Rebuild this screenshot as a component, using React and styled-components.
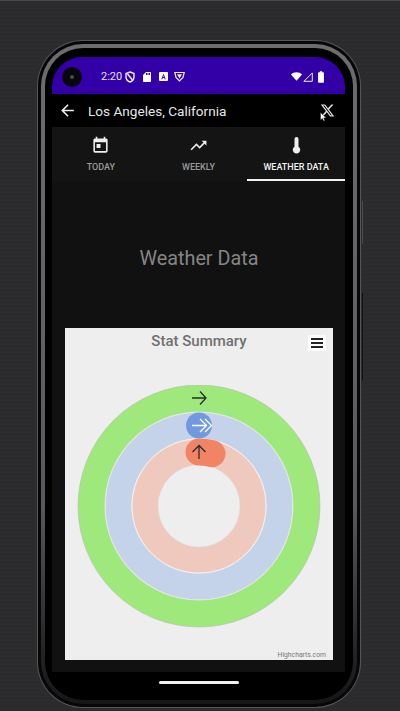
import React from "react";
import styled, { createGlobalStyle } from "styled-components";
import { FaXTwitter } from "react-icons/fa6";
import {
  MdArrowBack,
  MdBatteryFull,
  MdSdCard,
  MdToday,
  MdTrendingUp,
} from "react-icons/md";

const GlobalStyle = createGlobalStyle`
  html, body {
    margin: 0;
    padding: 0;
    background: #2b2b2d;
    font-family: Roboto, "Liberation Sans", sans-serif;
  }
`;

const Page = styled.div`
  width: 400px;
  height: 711px;
  box-sizing: border-box;
  padding: 39px 39px 3px 37px;
  overflow: hidden;
  border-top: 1px solid #4a4a4c;
  background: repeating-linear-gradient(#2b2b2d 0 3px, #2d2d2f 3px 4px);
`;

const Phone = styled.div`
  position: relative;
  height: 668px;
  box-sizing: border-box;
  padding: 1px;
  border-radius: 46px;
  background: #56565a;
`;

const Shell = styled.div`
  height: 100%;
  box-sizing: border-box;
  padding: 3px;
  border-radius: 45px;
  background: #070707;
`;

const Band = styled.div`
  height: 100%;
  box-sizing: border-box;
  padding: 4px;
  border-radius: 42px;
  background: linear-gradient(#6c6c6e 0%, #59595b 70%, #242425 92%, #161617 100%);
`;

const Bezel = styled.div`
  height: 100%;
  box-sizing: border-box;
  padding: 9px 8px 0 7px;
  border-radius: 38px;
  background: #000;
  display: flex;
  flex-direction: column;
`;

const SideKey = styled.div`
  position: absolute;
  right: -2px;
  top: ${(p) => p.$top}px;
  width: 1px;
  height: ${(p) => p.$height}px;
  background: ${(p) => p.$color};
`;

const StatusBar = styled.div`
  height: 37px;
  flex: none;
  box-sizing: border-box;
  padding: 2px 17px 0 10px;
  border-radius: 30px 30px 0 0;
  background: #3300a8;
  color: #fff;
  display: flex;
  align-items: center;
`;

const Camera = styled.div`
  width: 20px;
  height: 20px;
  border-radius: 50%;
  background: #08080c;
  margin-right: 19px;
  display: flex;
  align-items: center;
  justify-content: center;
  &::after {
    content: "";
    width: 4px;
    height: 4px;
    border-radius: 50%;
    background: #4a4a55;
  }
`;

const Clock = styled.span`
  font-size: 11px;
  color: #e6e0f5;
  margin-right: 3px;
`;

const StatusIcons = styled.div`
  display: flex;
  align-items: center;
  gap: ${(p) => p.$gap}px;
  margin-left: ${(p) => (p.$end ? "auto" : "0")};
`;

const AppBar = styled.div`
  height: 33px;
  flex: none;
  box-sizing: border-box;
  padding: 0 10px 0 6px;
  background: #000;
  color: #eee;
  display: flex;
  align-items: center;
`;

const AppTitle = styled.span`
  font-size: 13.6px;
  margin-left: 11px;
  color: #e6e6e6;
`;

const ShareButton = styled.div`
  position: relative;
  margin-left: auto;
  display: flex;
  color: #ddd;
`;

const Cursor = styled.svg`
  position: absolute;
  left: 0;
  top: 9px;
`;

const Tabs = styled.div`
  height: 54px;
  flex: none;
  background: #141414;
  display: grid;
  grid-template-columns: repeat(3, 1fr);
`;

const Tab = styled.div`
  box-sizing: border-box;
  padding-top: 9px;
  display: flex;
  flex-direction: column;
  align-items: center;
  gap: 7px;
  color: ${(p) => (p.$active ? "#f2f2f2" : "#9a9a9a")};
  border-bottom: 2px solid ${(p) => (p.$active ? "#f2f2f2" : "transparent")};
  font-size: 9px;
  font-weight: 500;
  & > svg {
    color: #eee;
  }
`;

const Content = styled.div`
  height: 491px;
  flex: none;
  box-sizing: border-box;
  padding: 0 12px 12px 13px;
  background: #111;
  display: flex;
  flex-direction: column;
`;

const Heading = styled.h1`
  margin: 63px 0 54px;
  height: 30px;
  line-height: 30px;
  text-align: center;
  font-size: 19.8px;
  font-weight: 400;
  color: #858585;
`;

const Chart = styled.div`
  position: relative;
  width: 268px;
  height: 332px;
  background: #eeeeee;
  display: flex;
  flex-direction: column;
  align-items: center;
`;

const ChartTitle = styled.div`
  height: 26px;
  line-height: 26px;
  flex: none;
  font-size: 15px;
  font-weight: 500;
  color: #707070;
`;

const MenuButton = styled.div`
  position: absolute;
  top: 7px;
  right: 7px;
  width: 18px;
  height: 16px;
  box-sizing: border-box;
  padding: 3px 3px;
  background: #fbfbfb;
  display: flex;
  flex-direction: column;
  justify-content: space-between;
`;

const MenuBar = styled.span`
  height: 2px;
  background: #222;
`;

const Rings = styled.svg`
  margin-top: 31px;
  flex: none;
`;

const Credit = styled.span`
  position: absolute;
  right: 7px;
  bottom: 1px;
  font-size: 6.8px;
  color: #777;
`;

const NavBar = styled.div`
  height: 28px;
  flex: none;
  display: flex;
  justify-content: center;
  padding-top: 9px;
  box-sizing: border-box;
`;

const HomePill = styled.div`
  width: 80px;
  height: 3px;
  border-radius: 2px;
  background: #f2f2f2;
`;

const CX = 134;
const CY = 121;

const App = () => (
  <>
    <GlobalStyle />
    <Page>
      <Phone>
        <SideKey $top={161} $height={43} $color="#4c4c4e" />
        <SideKey $top={253} $height={87} $color="#111112" />
        <Shell>
          <Band>
            <Bezel>
              <StatusBar>
                <Camera />
                <Clock>2:20</Clock>
                <StatusIcons $gap={6}>
                  <svg width="10" height="12" viewBox="0 0 10 12" fill="none" stroke="#eee" strokeWidth="1.4">
                    <path d="M5 1l4 1.500v3.200c0 2.600-1.800 4.500-4 5.300-2.200-.8-4-2.700-4-5.300V2.500z" />
                    <path d="M2.500 3l5 6" />
                  </svg>
                  <MdSdCard size={12} color="#fff" />
                  <svg width="9" height="9" viewBox="0 0 9 9">
                    <rect width="9" height="9" rx="1" fill="#fff" />
                    <path d="M4.500 1.800L6.800 7.200H5.700L5.300 6H3.700L3.300 7.200H2.200zM4.050 5h.9L4.500 3.600z" fill="#3300a8" />
                  </svg>
                  <svg width="11" height="11" viewBox="0 0 11 11" fill="none" stroke="#eee" strokeWidth="1.2">
                    <path d="M.8 1.500h9.400L9 6.500l-3.500 3.500L2 6.500z" />
                    <path d="M3 3.300h5L5.500 7.500z" fill="#eee" stroke="none" />
                  </svg>
                </StatusIcons>
                <StatusIcons $gap={1} $end>
                  <svg width="11" height="9" viewBox="0 0 11 9">
                    <path d="M5.500 8.800L0 2.400C1.500 1 3.400.2 5.500.2S9.500 1 11 2.400z" fill="#fff" />
                  </svg>
                  <svg width="10" height="10" viewBox="0 0 10 10" fill="none" stroke="#eee" strokeWidth="1">
                    <path d="M9.300.9v8.400H.9z" />
                  </svg>
                  <MdBatteryFull size={14} color="#fff" />
                </StatusIcons>
              </StatusBar>
              <AppBar>
                <MdArrowBack size={19} />
                <AppTitle>Los Angeles, California</AppTitle>
                <ShareButton>
                  <FaXTwitter size={15} />
                  <Cursor width="7" height="10" viewBox="0 0 7 10">
                    <path d="M.5.500v7.500l1.900-1.600L3.600 9l1.300-.6-1.200-2.500h2.500z" fill="#fff" stroke="#222" strokeWidth=".5" />
                  </Cursor>
                </ShareButton>
              </AppBar>
              <Tabs>
                <Tab>
                  <MdToday size={19} />
                  TODAY
                </Tab>
                <Tab>
                  <MdTrendingUp size={19} />
                  WEEKLY
                </Tab>
                <Tab $active>
                  <svg width="19" height="19" viewBox="0 0 19 19" fill="currentColor">
                    <path d="M9.500 1a2 2 0 0 1 2 2v7.700a3.700 3.700 0 1 1-4 0V3a2 2 0 0 1 2-2z" />
                  </svg>
                  WEATHER DATA
                </Tab>
              </Tabs>
              <Content>
                <Heading>Weather Data</Heading>
                <Chart>
                  <ChartTitle>Stat Summary</ChartTitle>
                  <MenuButton>
                    <MenuBar />
                    <MenuBar />
                    <MenuBar />
                  </MenuButton>
                  <Rings width="268" height="244" viewBox="0 0 268 244" fill="none">
                    <circle cx={CX} cy={CY} r="107.500" stroke="#9fe87c" strokeWidth="27" />
                    <circle cx={CX} cy={CY} r="121" stroke="#b5b5b5" strokeWidth=".5" />
                    <circle cx={CX} cy={CY} r="80.500" stroke="#c5d3ea" strokeWidth="26" />
                    <circle cx={CX} cy={CY} r="54" stroke="#efc9bd" strokeWidth="26" />
                    <circle cx={CX} cy={CY} r="94" stroke="#e6e6e6" strokeWidth="1" />
                    <circle cx={CX} cy={CY} r="67" stroke="#f2f2f2" strokeWidth="1" />
                    <circle cx={CX} cy={CY} r="41" stroke="#dcdcdc" strokeWidth=".5" />
                    <circle cx={CX} cy={CY - 80.5} r="13" fill="#7099e0" />
                    <path d={`M${CX} ${CY - 54}A54 54 0 0 1 ${CX + 13} ${CY - 52.4}`} stroke="#f08465" strokeWidth="27" strokeLinecap="round" />
                    <g stroke="#2b2b2d" strokeWidth="1.300">
                      <path d={`M${CX - 7} ${CY - 108}h13M${CX + 1} ${CY - 114.5}l6 6.500-6 6.500`} />
                      <path d={`M${CX} ${CY - 47}v-13M${CX - 6.5} ${CY - 54}l6.500-6.500 6.500 6.500`} />
                    </g>
                    <path d={`M${CX - 7} ${CY - 80.5}h15M${CX + 1} ${CY - 87}l6.500 6.500-6.500 6.500M${CX + 6} ${CY - 87}l6.500 6.500-6.500 6.500`} stroke="#fff" strokeWidth="1.300" />
                  </Rings>
                  <Credit>Highcharts.com</Credit>
                </Chart>
              </Content>
              <NavBar>
                <HomePill />
              </NavBar>
            </Bezel>
          </Band>
        </Shell>
      </Phone>
    </Page>
  </>
);

export default App;
